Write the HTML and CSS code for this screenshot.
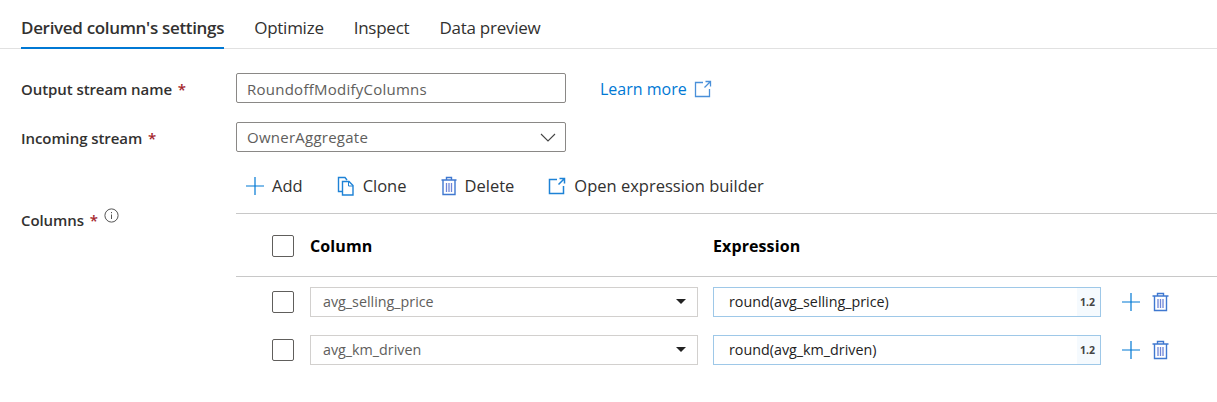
FILE: index.html
```html
<!DOCTYPE html>
<html lang="en">

<head>
    <meta charset="UTF-8">
    <title>Derived column's settings</title>
    <link rel="stylesheet" href="styles.css">
</head>

<body>
    <div class="tabs">
        <div class="tab active">Derived column's settings</div>
        <div class="tab">Optimize</div>
        <div class="tab">Inspect</div>
        <div class="tab">Data preview</div>
    </div>

    <div class="form">
        <div class="field first">
            <div class="label">Output stream name <span class="req">*</span></div>
            <div class="input-box">RoundoffModifyColumns</div>
            <a class="learn">Learn more
                <svg class="ext" width="18" height="18" viewBox="0 0 18 18"><path d="M9 2.500H1.500v14h14V9M10.500 7.500l5.500-5.500M11.500 1.500h5v5" fill="none" stroke="#4a90d9" stroke-width="1.300"/></svg>
            </a>
        </div>
        <div class="field">
            <div class="label">Incoming stream <span class="req">*</span></div>
            <div class="input-box select">OwnerAggregate
                <svg width="16" height="9" viewBox="0 0 16 9"><path d="M1 1l7 7 7-7" fill="none" stroke="#444" stroke-width="1.100"/></svg>
            </div>
        </div>

        <div class="columns">
            <div class="columns-label">
                <div class="label">Columns <span class="req">*</span></div>
                <svg class="info" width="15" height="15" viewBox="0 0 15 15"><circle cx="7.500" cy="7.500" r="6.600" fill="none" stroke="#555" stroke-width="1"/><path d="M7.500 6.500v4.500M7.500 4v1.200" stroke="#555" stroke-width="1"/></svg>
            </div>
            <div class="columns-main">
                <div class="toolbar">
                    <div class="tool tool-add">
                        <svg width="20" height="20" viewBox="0 0 20 20"><path d="M10 1v18M1 10h18" stroke="#0078d4" stroke-width="1.200"/></svg>
                        Add
                    </div>
                    <div class="tool">
                        <svg width="18" height="20" viewBox="0 0 18 20"><path d="M5 15.500H1.500V1.500h6.500l2 2.500M5.500 5.500h6.500l4 4v9.500H5.500z" fill="none" stroke="#1e82d6" stroke-width="1.400"/><path d="M11.500 5.500v4.500h4.500" fill="none" stroke="#1e82d6"/></svg>
                        Clone
                    </div>
                    <div class="tool">
                        <svg width="16" height="20" viewBox="0 0 16 20"><path d="M0.500 4h15M5.500 4V1.500h5V4M2 4v14.500h12V4" fill="none" stroke="#3f78d0" stroke-width="1.400"/><path d="M5.500 7v9M8 7v9M10.500 7v9" stroke="#6f86d8" stroke-width="1.300"/></svg>
                        Delete
                    </div>
                    <div class="tool">
                        <svg width="18" height="18" viewBox="0 0 18 18"><path d="M9 2.500H1.500v14h14V9M10.500 7.500l5.500-5.500M11.500 1.500h5v5" fill="none" stroke="#1e82d6" stroke-width="1.500"/></svg>
                        Open expression builder
                    </div>
                </div>

                <div class="row head">
                    <span class="check"></span>
                    <div class="col-name">Column</div>
                    <div class="col-expr">Expression</div>
                </div>

                <div class="rows">
                    <div class="row">
                        <span class="check"></span>
                        <div class="col-select">avg_selling_price<span class="caret"></span></div>
                        <div class="col-input">round(avg_selling_price)<span class="type">1.2</span></div>
                        <svg class="row-add" width="20" height="20" viewBox="0 0 20 20"><path d="M10 1v18M1 10h18" stroke="#0078d4" stroke-width="1.200"/></svg>
                        <svg class="row-del" width="17" height="20" viewBox="0 0 17 20"><path d="M0.500 4h16M5.500 4V1.500h6V4M2.500 4v14.500h12V4" fill="none" stroke="#3f78d0" stroke-width="1.400"/><path d="M6 7v9M8.500 7v9M11 7v9" stroke="#6f86d8" stroke-width="1.300"/></svg>
                    </div>
                    <div class="row">
                        <span class="check"></span>
                        <div class="col-select">avg_km_driven<span class="caret"></span></div>
                        <div class="col-input">round(avg_km_driven)<span class="type">1.2</span></div>
                        <svg class="row-add" width="20" height="20" viewBox="0 0 20 20"><path d="M10 1v18M1 10h18" stroke="#0078d4" stroke-width="1.200"/></svg>
                        <svg class="row-del" width="17" height="20" viewBox="0 0 17 20"><path d="M0.500 4h16M5.500 4V1.500h6V4M2.500 4v14.500h12V4" fill="none" stroke="#3f78d0" stroke-width="1.400"/><path d="M6 7v9M8.500 7v9M11 7v9" stroke="#6f86d8" stroke-width="1.300"/></svg>
                    </div>
                </div>
            </div>
        </div>
    </div>
</body>
</html>
```

FILE: styles.css
```css
body {
    font-family: 'Open Sans', 'Noto Sans', sans-serif;
    background-color: #fff;
    color: #323130;
    margin: 0;
    padding: 0;
    font-size: 15px;
}

.tabs {
    display: flex;
    gap: 30px;
    height: 48px;
    padding-left: 21px;
    border-bottom: 1px solid #e1e1e1;
}

.tab {
    font-size: 17px;
    letter-spacing: -0.25px;
    line-height: 56px;
    height: 48px;
    color: #323130;
}

.tab.active {
    font-weight: 600;
    letter-spacing: -0.32px;
    border-bottom: 2px solid #0078d4;
    height: 47px;
}

.form {
    padding-left: 21px;
}

.field {
    display: flex;
    align-items: center;
    height: 30px;
    margin-top: 19px;
}

.field.first {
    margin-top: 24px;
}

.label {
    font-weight: 600;
    font-size: 15px;
    letter-spacing: -0.08px;
    line-height: 32px;
    padding-top: 2px;
    width: 215px;
    flex: none;
    color: #323130;
}

.req {
    color: #a4262c;
    margin-left: 2px;
}

.input-box {
    width: 330px;
    height: 30px;
    box-sizing: border-box;
    border: 1px solid #8a8886;
    border-radius: 2px;
    padding: 0 10px;
    font-size: 15px;
    letter-spacing: 0.25px;
    line-height: 30px;
    color: #605e5c;
}

.select {
    display: flex;
    justify-content: space-between;
    align-items: center;
    padding-right: 9px;
}

.learn {
    display: flex;
    align-items: center;
    gap: 7px;
    margin-left: 34px;
    padding-top: 2px;
    color: #0078d4;
    font-size: 16px;
    line-height: 32px;
}

.columns {
    display: flex;
}

.columns-label {
    width: 215px;
    flex: none;
    display: flex;
    align-items: flex-start;
    padding-top: 50px;
}

.columns-label .label {
    width: auto;
}

.info {
    margin: 6px 0 0 6px;
}

.columns-main {
    flex: 1;
}

.toolbar {
    display: flex;
    gap: 34px;
    height: 62px;
    align-items: center;
    padding: 6px 0 0 9px;
    border-bottom: 1px solid #c8c8c8;
    box-sizing: border-box;
    font-size: 16.5px;
}

.tool {
    display: flex;
    align-items: center;
    gap: 8px;
    color: #323130;
}

.tool-add {
    gap: 7px;
}

.row {
    display: flex;
    align-items: center;
    padding-left: 36px;
}

.head {
    height: 63px;
    padding-top: 2px;
    border-bottom: 1px solid #c8c8c8;
    box-sizing: border-box;
    font-weight: 700;
    font-size: 16px;
    letter-spacing: 0.1px;
    color: #000;
}

.check {
    width: 22px;
    height: 22px;
    box-sizing: border-box;
    border: 1px solid #605e5c;
    border-radius: 2px;
    flex: none;
    margin-right: 16px;
}

.col-name {
    width: 403px;
}

.rows {
    padding-top: 10px;
    display: flex;
    flex-direction: column;
    gap: 18px;
}

.col-select,
.col-input {
    width: 388px;
    height: 30px;
    box-sizing: border-box;
    display: flex;
    align-items: center;
    justify-content: space-between;
    font-size: 14.3px;
}

.col-select {
    border: 1px solid #d2d0ce;
    padding: 0 11px 2px 12px;
    color: #605e5c;
    margin-right: 15px;
}

.caret {
    width: 0;
    height: 0;
    border-left: 5px solid transparent;
    border-right: 5px solid transparent;
    border-top: 5px solid #222;
}

.col-input {
    border: 1px solid #9ec8e8;
    padding: 0 0 2px 15px;
    color: #222;
}

.type {
    align-self: stretch;
    display: flex;
    align-items: center;
    margin-bottom: -2px;
    padding: 0 5px 0 3px;
    background-color: #f5fafe;
    font-size: 10.5px;
    font-weight: 700;
    color: #444;
}

.row-add {
    margin-left: 20px;
}

.row-del {
    margin-left: 11px;
}
```
